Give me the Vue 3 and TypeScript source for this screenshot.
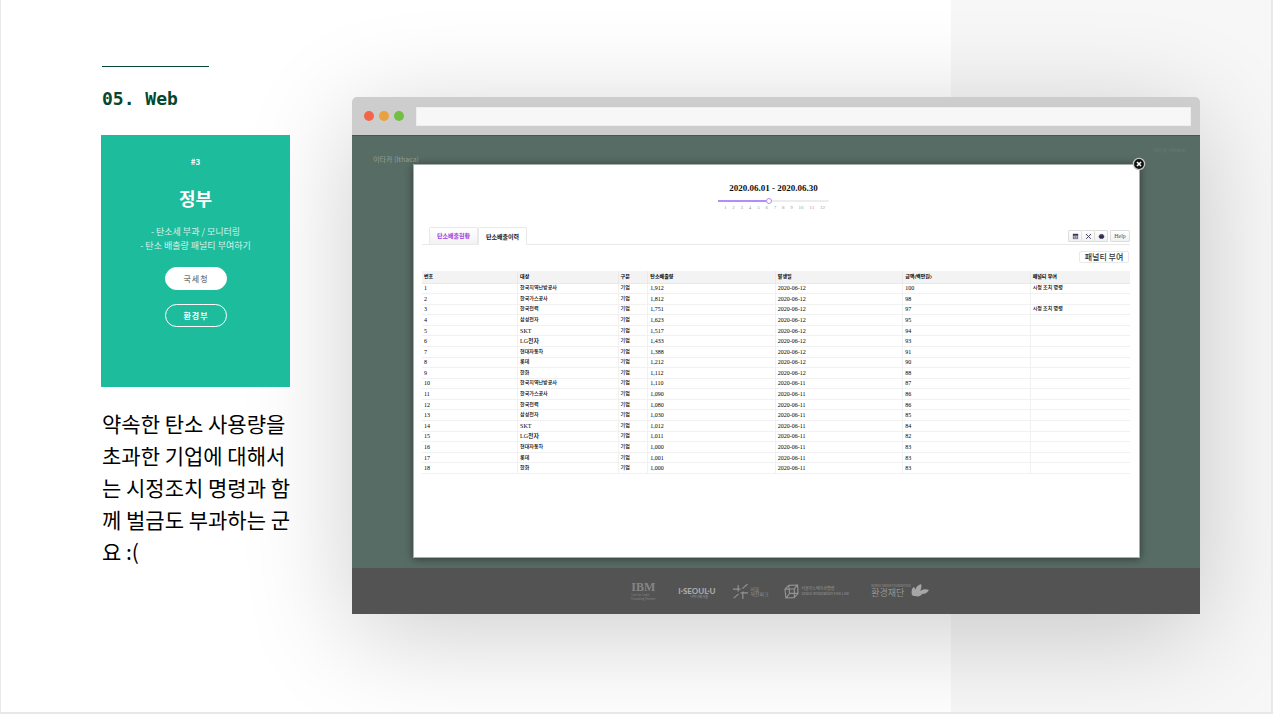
<script setup lang="ts">
import { ref, computed } from 'vue'

interface Row {
  company: string
  amount: string
  date: string
  fine: number
  penalty: string
}

const companies = ['한국지역난방공사', '한국가스공사', '한국전력', '삼성전자', 'SKT', 'LG전자', '현대자동차', '롯데', '한화']
const amounts = ['1,912', '1,812', '1,751', '1,623', '1,517', '1,433', '1,388', '1,212', '1,112', '1,110', '1,090', '1,080', '1,030', '1,012', '1,011', '1,000', '1,001', '1,000']
const fines = [100, 98, 97, 95, 94, 93, 91, 90, 88, 87, 86, 86, 85, 84, 82, 83, 83, 83]

const rows: Row[] = amounts.map((amount, i) => ({
  company: companies[i % companies.length],
  amount,
  date: i < 9 ? '2020-06-12' : '2020-06-11',
  fine: fines[i],
  penalty: i === 0 || i === 2 ? '시정 조치 명령' : '',
}))

const headers = ['번호', '대상', '구분', '탄소배출량', '발생일', '금액(백만원)', '패널티 부여']
const tabs = ['탄소배출현황', '탄소배출이력']
const activeTab = ref(1)
const month = ref(6)
const address = ref('')
const fill = computed(() => `${((month.value - 1) / 11) * 100}%`)
const period = computed(() => {
  const m = String(month.value).padStart(2, '0')
  const last = new Date(2020, month.value, 0).getDate()
  return `2020.${m}.01 - 2020.${m}.${last}`
})
const isLatin = (text: string) => /^[A-Z]/.test(text)
</script>

<template>
  <main class="slide">
    <section class="intro">
      <h1>05. Web</h1>
      <article class="card">
        <p class="tag">#3</p>
        <h2>정부</h2>
        <p class="duties">- 탄소세 부과 / 모니터링<br>- 탄소 배출량 패널티 부여하기</p>
        <button type="button" class="pill solid">국세청</button>
        <button type="button" class="pill">환경부</button>
      </article>
      <p class="note">약속한 탄소 사용량을 초과한 기업에 대해서는 시정조치 명령과 함께 벌금도 부과하는 군요 :(</p>
    </section>

    <section class="browser">
      <div class="chrome">
        <i class="dot red"></i>
        <i class="dot amber"></i>
        <i class="dot green"></i>
        <input v-model="address" class="address" type="text" aria-label="주소">
      </div>
      <div class="site">
        <header class="site-head">
          <span class="brand">이타카 (Ithaca)</span>
          <span class="crumb">이타카 (Ithaca)</span>
        </header>

        <div class="dialog" role="dialog" aria-label="탄소배출이력">
          <button type="button" class="close" aria-label="닫기">
            <svg viewBox="0 0 14 14">
              <circle cx="7" cy="7" r="5.600" fill="#111" stroke="#c4cac7" stroke-width="1.300" />
              <path d="M5 5l4 4M9 5l-4 4" stroke="#fff" stroke-width="1.600" />
            </svg>
          </button>

          <div class="period">
            <h3>{{ period }}</h3>
            <div class="slider">
              <div class="track"><div class="fill" :style="{ width: fill }"></div></div>
              <input v-model.number="month" type="range" min="1" max="12" aria-label="월">
            </div>
            <div class="months"><span v-for="m in 12" :key="m">{{ m }}</span></div>
          </div>

          <div class="tabbar">
            <button
              v-for="(tab, i) in tabs" :key="tab" type="button"
              class="tab" :class="{ active: activeTab === i }" @click="activeTab = i"
            >{{ tab }}</button>
            <div class="tools">
              <div class="group">
                <button type="button" aria-label="표">
                  <svg viewBox="0 0 8 8"><path d="M1 1h6v6H1z" fill="#6b6680" /><path d="M1 1h6v1.6H1z" fill="#3a3550" /><path d="M1.6 4h4.8M1.6 5.6h4.8M3 3v3.6M5 3v3.6" stroke="#d8d6e0" stroke-width=".5" /></svg>
                </button>
                <button type="button" aria-label="설정">
                  <svg viewBox="0 0 8 8"><path d="M1.4 1.400l5.200 5.200M6.600 1.400L1.400 6.600" stroke="#3f3a55" stroke-width="1.100" /><path d="M1 2.400L2.400 1M5.600 1l1.400 1.400" stroke="#3f3a55" /></svg>
                </button>
                <button type="button" aria-label="인쇄">
                  <svg viewBox="0 0 8 8"><rect x="2" y="1.200" width="4" height="5.600" fill="#5a5570" /><rect x=".8" y="2.600" width="6.400" height="3" rx="1.200" fill="#332e4c" /></svg>
                </button>
              </div>
              <button type="button" class="help">Help</button>
            </div>
          </div>

          <div class="actions"><button type="button" class="penalty">패널티 부여</button></div>

          <table>
            <colgroup>
              <col class="c-no"><col class="c-name"><col class="c-kind"><col class="c-wide"><col class="c-wide"><col class="c-wide"><col>
            </colgroup>
            <thead>
              <tr><th v-for="h in headers" :key="h" scope="col">{{ h }}</th></tr>
            </thead>
            <tbody>
              <tr v-for="(r, i) in rows" :key="i">
                <td class="num">{{ i + 1 }}</td>
                <td :class="{ num: isLatin(r.company) }">{{ r.company }}</td>
                <td>기업</td>
                <td class="num">{{ r.amount }}</td>
                <td class="num">{{ r.date }}</td>
                <td class="num">{{ r.fine }}</td>
                <td>{{ r.penalty }}</td>
              </tr>
            </tbody>
          </table>
        </div>
      </div>

      <footer class="partners">
        <div class="partner ibm">
          <strong>IBM</strong>
          <small>Call for Code<br>Founding Partner</small>
        </div>
        <div class="partner seoul">
          <strong>I·SEOUL·U</strong>
          <small>너와 나의 서울</small>
        </div>
        <div class="partner row park">
          <svg viewBox="0 0 16 16" fill="none" stroke="currentColor" stroke-width="1.200">
            <path d="M0 5.500h8M5.500 1v7M8 9.500h8M10.500 8v8M10 5L15.500 0M6 10.500L.8 15" />
          </svg>
          <span>서울<br>혁신파크</span>
        </div>
        <div class="partner row fab">
          <svg viewBox="0 0 16 16" fill="none" stroke="currentColor" stroke-width="1.200" stroke-linejoin="round">
            <path d="M1 5.500L5 1.500L14.500 1L15 10L11 14.500L2 15zM1 5.500L11 5L14.500 1M11 5v9.500M5 1.500L6 10L2 15M6 10h9" />
          </svg>
          <span>서울이노베이션팹랩<br>Seoul Innovation FAB LAB</span>
        </div>
        <div class="partner row green-fund">
          <div>
            <small>KOREA GREEN FOUNDATION</small>
            <span>환경재단</span>
          </div>
          <svg viewBox="0 0 18 14" fill="currentColor">
            <path d="M1 11C0 7 1 4 3 3c1 1 1 2 1 3C5 3 7 1 10 0c1 3 0 5-1 7 3-2 6-2 9-1-2 3-4 4-7 4-1 2-4 3-7 2-1 0-2 0-3-1z" />
          </svg>
        </div>
      </footer>
    </section>
  </main>
</template>

<style>
body {
  margin: 0;
}
</style>

<style scoped>
* {
  box-sizing: border-box;
}

h1, h2, h3, p {
  margin: 0;
}

button, input {
  font: inherit;
  margin: 0;
}

.slide {
  display: flex;
  align-items: flex-start;
  gap: 57px;
  min-height: 100vh;
  padding: 65px 71px 98px 100px;
  overflow: hidden;
  border: solid #e8e8e8;
  border-width: 0 2px 2px 1px;
  background: linear-gradient(90deg, #fff 74.8%, #f7f7f7 74.8%);
  font-family: Roboto, "Noto Sans CJK KR", sans-serif;
}

.intro {
  position: relative;
  z-index: 1;
  flex: 0 0 194px;
}

h1 {
  padding-left: 1px;
  color: #05472f;
  font: 700 18px/24px "DejaVu Sans Mono", monospace;
}

h1::before {
  content: "";
  display: block;
  width: 107px;
  margin: 1px 0 20px;
  border-top: 1px solid #05472f;
}

.card {
  display: flex;
  flex-direction: column;
  align-items: center;
  width: 189px;
  min-height: 252px;
  margin-top: 24px;
  padding-top: 20px;
  background: #1dbc9c;
  color: #fff;
  font-family: "Noto Sans CJK KR", sans-serif;
}

.tag {
  font-size: 8px;
  font-weight: 700;
  line-height: 14px;
}

h2 {
  margin-top: 16px;
  font-size: 18px;
  font-weight: 700;
  line-height: 26px;
}

.duties {
  margin: 14px 0;
  font-size: 9px;
  line-height: 14px;
  text-align: center;
  opacity: .8;
}

.pill {
  width: 62px;
  height: 23px;
  margin-bottom: 14px;
  padding: 0 0 0 1px;
  border: 1px solid #fff;
  border-radius: 12px;
  background: none;
  color: #fff;
  font-size: 8px;
  font-weight: 700;
  line-height: 12px;
  letter-spacing: 1px;
}

.solid {
  background: #fff;
  color: #777;
  font-weight: 500;
}

.note {
  margin-top: 20px;
  padding-left: 1px;
  color: #000;
  font: 400 21px/32px "Noto Sans CJK KR", sans-serif;
  word-break: break-all;
}

.browser {
  flex: 1;
  min-width: 0;
  margin-top: 32px;
  border-radius: 5px 5px 0 0;
  box-shadow: 0 20px 110px rgba(0, 0, 0, .2);
}

.chrome {
  display: flex;
  align-items: center;
  gap: 5px;
  height: 38px;
  padding: 0 9px 0 12px;
  border-radius: 5px 5px 0 0;
  background: #cdcdcd;
}

.dot {
  flex: none;
  width: 10px;
  height: 10px;
  border-radius: 50%;
}

.red { background: #f1654a; }
.amber { background: #eba13d; }
.green { background: #72bf44; }

.address {
  flex: 1;
  height: 19px;
  margin-left: 7px;
  padding: 0 6px;
  border: 1px solid #eee;
  background: #f7f7f7;
  font-size: 11px;
}

.site {
  padding-bottom: 10px;
  border-top: 1px solid #46574f;
  background: #576c64;
}

.site-head {
  display: flex;
  justify-content: space-between;
  height: 28px;
  padding: 9px 14px 0 21px;
  font-family: "Noto Sans CJK KR", sans-serif;
}

.brand {
  padding-top: 9px;
  color: #939e99;
  font-size: 7px;
  line-height: 10px;
}

.crumb {
  color: #6a7d75;
  font-size: 5px;
  line-height: 10px;
}

.dialog {
  position: relative;
  min-height: 394px;
  margin: 0 60px 0 61px;
  padding: 17px 9px 0 8px;
  border: 1px solid #a5b0ac;
  background: #fff;
  box-shadow: 0 1px 8px rgba(0, 0, 0, .45);
}

.close {
  position: absolute;
  top: -8px;
  right: -7px;
  width: 14px;
  height: 14px;
  padding: 0;
  border: 0;
  background: none;
}

.close svg {
  display: block;
}

.period {
  width: 111px;
  margin: 0 calc(50% - 53px) 0 auto;
  font-family: "Liberation Serif", serif;
}

h3 {
  color: #111;
  font-size: 9px;
  line-height: 12px;
  text-align: center;
  white-space: nowrap;
}

.slider {
  position: relative;
  display: flex;
  align-items: center;
  height: 8px;
  margin-top: 3px;
}

.track {
  flex: 1;
  height: 2px;
  border-radius: 1px;
  background: #ececec;
}

.fill {
  height: 2px;
  background: #b48cf5;
}

.slider input {
  position: absolute;
  inset: 0;
  width: 100%;
  height: 8px;
  appearance: none;
  background: none;
}

.slider input::-webkit-slider-thumb {
  width: 6px;
  height: 6px;
  appearance: none;
  border: 1px solid #b48cf5;
  border-radius: 50%;
  background: #fff;
}

.months {
  display: flex;
  justify-content: space-between;
  padding: 0 4px 0 6px;
  color: #999;
  font-size: 5px;
  line-height: 6px;
}

.tabbar {
  display: flex;
  align-items: flex-end;
  height: 19px;
  margin-top: 15px;
  padding-left: 7px;
  border-bottom: 1px solid #e9e9e9;
}

.tab {
  width: 49px;
  height: 17px;
  padding: 0;
  border: 1px solid #e9e9e9;
  border-bottom: 0;
  border-radius: 2px 2px 0 0;
  background: linear-gradient(#fff, #f2f2f2);
  color: #9b3fe0;
  font: 700 6px/8px "Noto Sans CJK KR", sans-serif;
}

.tab.active {
  height: 18px;
  margin-bottom: -1px;
  background: #fff;
  color: #111;
}

.tools {
  display: flex;
  gap: 2px;
  height: 13px;
  margin: 0 0 1px auto;
}

.group {
  display: flex;
}

.tools button {
  display: flex;
  align-items: center;
  justify-content: center;
  width: 14px;
  height: 12px;
  padding: 0;
  border: 1px solid #dedede;
  border-radius: 1px;
  background: linear-gradient(#fff, #f1f1f1);
}

.group button + button {
  width: 13px;
  border-left: 0;
}

.tools svg {
  width: 7px;
  height: 7px;
}

.tools .help {
  width: 20px;
  color: #55506a;
  font: 400 6px/8px "Liberation Serif", serif;
}

.actions {
  display: flex;
  justify-content: flex-end;
  padding: 6px 1px 8px;
}

.penalty {
  width: 50px;
  height: 12px;
  padding: 0;
  border: 1px solid #e9e9e9;
  border-radius: 2px;
  background: #fff;
  color: #333;
  font: 500 8px/10px "Noto Sans CJK KR", sans-serif;
}

table {
  width: 100%;
  height: 203px;
  border-collapse: collapse;
  border-bottom: 1px solid #e2e2e2;
  table-layout: fixed;
  color: #000;
  font: 500 5px/6px "Liberation Serif", "Noto Sans CJK KR", serif;
}

.c-no { width: 13.500%; }
.c-name { width: 14.200%; }
.c-kind { width: 4.200%; }
.c-wide { width: 18%; }

th, td {
  padding: 0 2px;
  border-bottom: 1px solid #f1f1f1;
  border-left: 1px solid #f1f1f1;
  text-align: left;
  white-space: nowrap;
}

th:first-child, td:first-child {
  border-left: 0;
}

th {
  height: 12px;
  border-color: #e9e9e9;
  background: #f3f3f3;
}

.num {
  font-size: 6px;
}

.partners {
  display: flex;
  align-items: center;
  justify-content: center;
  height: 46px;
  padding-left: 8px;
  background: #535353;
  color: #939393;
  font-family: "Noto Sans CJK KR", sans-serif;
}

.partner {
  font-size: 5px;
  line-height: 5px;
  white-space: nowrap;
}

.partner strong, .partner small {
  display: block;
}

.partner small {
  font-size: 3px;
  line-height: 4px;
}

.row {
  display: flex;
  align-items: center;
  gap: 2px;
}

.row svg {
  flex: none;
  width: 15px;
  height: 15px;
}

.ibm {
  width: 47px;
  color: #858585;
}

.ibm strong {
  font: 700 12px/12px "Liberation Serif", serif;
}

.seoul {
  width: 55px;
  padding-top: 4px;
  color: #aaa;
}

.seoul strong {
  font: 900 8px/8px Lato, sans-serif;
}

.seoul small {
  padding-left: 12px;
}

.park {
  width: 51px;
}

.fab {
  width: 87px;
  font-size: 4px;
}

.green-fund {
  gap: 0;
}

.green-fund span {
  font-size: 9px;
  line-height: 10px;
}

.green-fund svg {
  width: 18px;
  height: 14px;
  color: #a6a6a6;
}
</style>
